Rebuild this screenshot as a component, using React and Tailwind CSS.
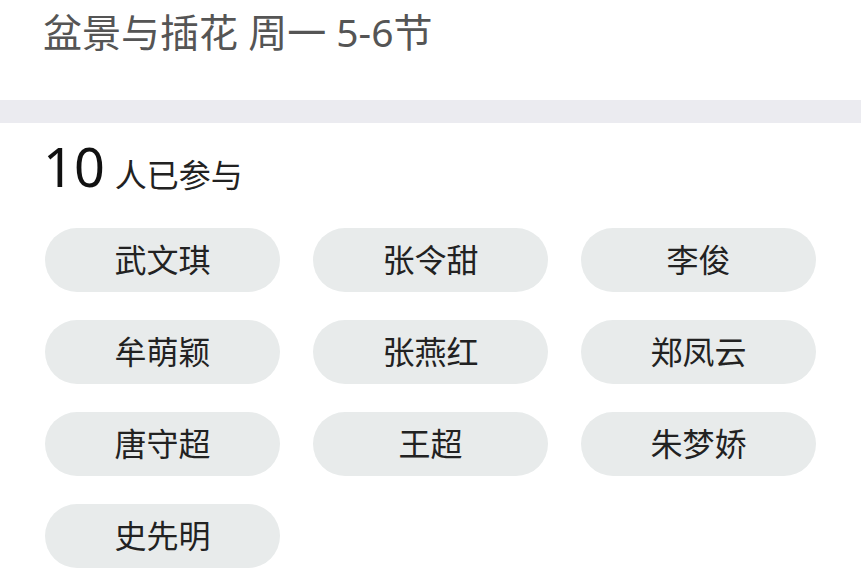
const names = ['武文琪', '张令甜', '李俊', '牟萌颖', '张燕红', '郑凤云', '唐守超', '王超', '朱梦娇', '史先明']

const font = { fontFamily: '"Noto Sans", "Noto Sans CJK SC", sans-serif' }

export default function App() {
  return (
    <div className='w-[861px] h-[581px] bg-white overflow-hidden' style={font}>
      {/* Title */}
      <div className='h-[100px] pl-[43px] pt-[6px]'>
        <h1 className='text-[39px] leading-[52px] text-[#555555]'>盆景与插花 周一 5-6节</h1>
      </div>

      <div className='h-[23px] bg-[#ebebf0]' />

      {/* Participants */}
      <div className='px-[45px]'>
        <div className='flex items-baseline h-[105px] pt-[12px]'>
          <span className='-ml-[2px] text-[54px] leading-[62px] text-[#111111]'>10</span>
          <span className='ml-[10px] text-[32px] leading-[62px] text-[#222222]'>人已参与</span>
        </div>
        <div className='grid grid-cols-[235px_235px_235px] gap-x-[33px] gap-y-[28px]'>
          {names.map((n, i) => (
            <div
              key={i}
              className='h-[64px] rounded-full bg-[#e8ebeb] flex items-center justify-center text-[32px] text-[#222222]'
            >
              {n}
            </div>
          ))}
        </div>
      </div>
    </div>
  )
}
